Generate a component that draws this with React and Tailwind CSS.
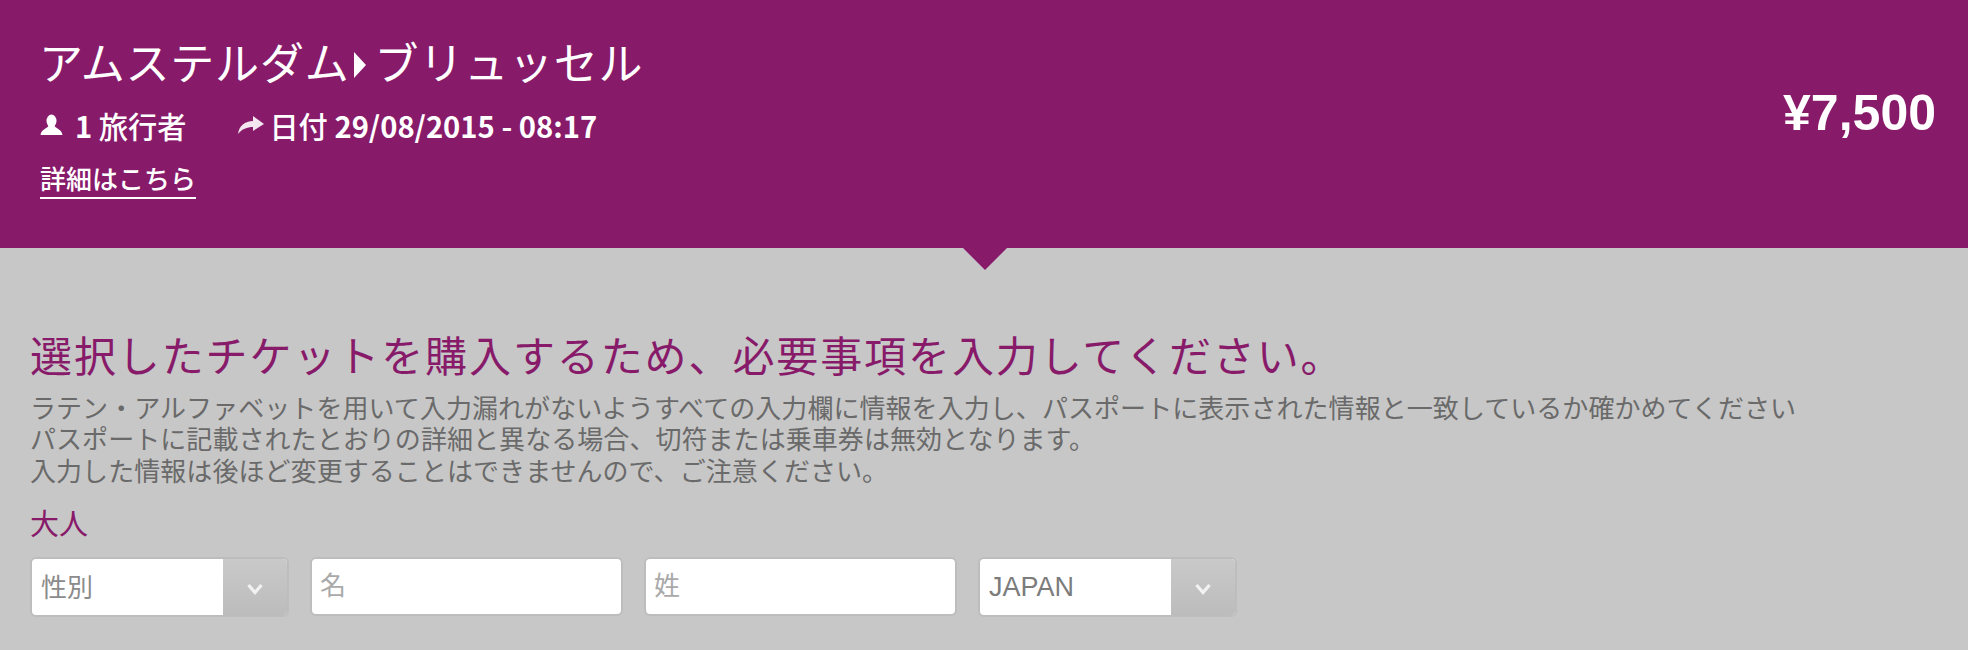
const jp = "font-['Noto_Sans_CJK_JP','Noto_Sans',sans-serif]"

const SelectBox = ({ label, dark }) => (
  <div className="flex h-[60px] w-[259px] overflow-hidden rounded-md border-2 border-[#bdbdbd] bg-white">
    <div className={`flex-1 pl-[9px] ${dark ? "font-['Liberation_Sans',sans-serif] text-[27px] leading-[56px] text-[#7c7c7c]" : "text-[26px] leading-[54px] text-[#8b8b8b]"}`}>
      {label}
    </div>
    <div className="flex w-[64px] items-center justify-center bg-gradient-to-b from-[#c9c9c9] to-[#bcbcbc]">
      <svg width="18" height="14" viewBox="0 0 18 14" fill="none" className="mt-1">
        <path d="M2.5 3 L9 10.5 L15.5 3" stroke="#f2f2f2" strokeWidth="3.2" />
      </svg>
    </div>
  </div>
)

const TextBox = ({ placeholder }) => (
  <input
    placeholder={placeholder}
    className="h-[59px] w-[313px] rounded-md border-2 border-[#bdbdbd] bg-white pb-[6px] pl-[8px] text-[26px] placeholder:text-[#a9a9a9]"
  />
)

const App = () => {
  return (
    <div className={`h-[650px] w-[1968px] overflow-hidden bg-[#c7c7c7] ${jp}`}>
      <div className="relative flex h-[248px] justify-between bg-[#881a6a] pl-[39px] pr-[32px] text-white">
        <div>
          <div className="mt-[29px] flex h-[64px] items-center text-[44px] leading-[64px] tracking-[0.8px]">
            <span>アムステルダム</span>
            <svg width="14" height="26" viewBox="0 0 14 26" className="ml-[3px] mr-[8px] mt-[8px]">
              <path d="M1 0 L13 13 L1 26 Z" fill="#fff" />
            </svg>
            <span>ブリュッセル</span>
          </div>
          <div className="mt-[14px] flex h-[36px] items-center text-[29.2px] font-bold leading-[36px]">
            <svg width="23" height="22" viewBox="0 0 22 22" className="ml-[1px] mr-[12px]">
              <ellipse cx="11" cy="7" rx="5" ry="6.5" fill="#fff" />
              <path d="M0 21 C1 15 6 15 8 12 L14 12 C16 15 21 15 22 21 Z" fill="#fff" />
            </svg>
            <span>1 <span className="font-medium">旅行者</span></span>
            <svg width="28" height="19" viewBox="0 0 28 19" className="ml-[51px] mr-[4px]">
              <path d="M1 18 C2 10 8 5 16 5 L16 0 L27 8 L16 15 L16 11 C10 11 5 13 1 18 Z" fill="#f4e6f0" />
            </svg>
            <span><span className="font-medium">日付</span> 29/08/2015 - 08:17</span>
          </div>
          <a href="#" className="ml-[1px] mt-[17px] inline-block h-[39px] border-b-2 border-white text-[26px] font-medium leading-[36px]">
            詳細はこちら
          </a>
        </div>
        <div className="mt-[85px] h-[56px] font-['Liberation_Sans',sans-serif] text-[50px] font-bold leading-[56px]">
          ¥7,500
        </div>
        <div className="absolute left-[963px] top-full h-0 w-0 border-x-[22px] border-t-[22px] border-x-transparent border-t-[#881a6a]" />
      </div>

      <div className="pl-[30px]">
        <h1 className="mt-[78px] text-[42px] font-normal leading-[56px] tracking-[1.9px] text-[#881a6a]">
          選択したチケットを購入するため、必要事項を入力してください。
        </h1>
        <p className="mt-[9px] text-[26px] leading-[31.4px] tracking-[0.06px] text-[#6a6a6a]">
          ラテン・アルファベットを用いて入力漏れがないようすべての入力欄に情報を入力し、パスポートに表示された情報と一致しているか確かめてください
          <br />
          パスポートに記載されたとおりの詳細と異なる場合、切符または乗車券は無効となります。
          <br />
          入力した情報は後ほど変更することはできませんので、ご注意ください。
        </p>
        <div className="mt-[17px] h-[40px] text-[29px] leading-[40px] text-[#881a6a]">大人</div>
        <div className="mt-[15px] flex items-start gap-[21px]">
          <SelectBox label="性別" />
          <TextBox placeholder="名" />
          <TextBox placeholder="姓" />
          <SelectBox label="JAPAN" dark />
        </div>
      </div>
    </div>
  )
}

export default App
